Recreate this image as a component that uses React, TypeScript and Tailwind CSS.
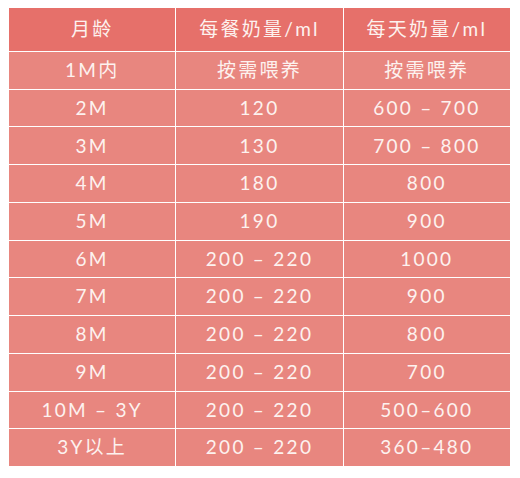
const header = ["月龄", "每餐奶量/ml", "每天奶量/ml"];

const rows: [string, string, string][] = [
  ["1M内", "按需喂养", "按需喂养"],
  ["2M", "120", "600 – 700"],
  ["3M", "130", "700 – 800"],
  ["4M", "180", "800"],
  ["5M", "190", "900"],
  ["6M", "200 – 220", "1000"],
  ["7M", "200 – 220", "900"],
  ["8M", "200 – 220", "800"],
  ["9M", "200 – 220", "700"],
  ["10M – 3Y", "200 – 220", "500–600"],
  ["3Y以上", "200 – 220", "360–480"],
];

export default function App() {
  return (
    <div
      className="w-[520px] h-[478px] bg-white pt-[8px] pl-[9px]"
      style={{ fontFamily: '"Lato", "Noto Sans CJK SC", sans-serif' }}
    >
      <div className="grid grid-cols-3 grid-rows-[43px_repeat(11,minmax(0,1fr))] gap-px bg-white w-[501px] h-[458px] text-[19px] tracking-[0.12em] text-[#fdf2ef]">
        {header.map((h) => (
          <div key={h} className="flex items-center justify-center bg-[#e6706a]">
            {h}
          </div>
        ))}
        {rows.map((r) =>
          r.map((c, j) => (
            <div key={r[0] + j} className="flex items-center justify-center bg-[#e8867f]">
              {c}
            </div>
          ))
        )}
      </div>
    </div>
  );
}
